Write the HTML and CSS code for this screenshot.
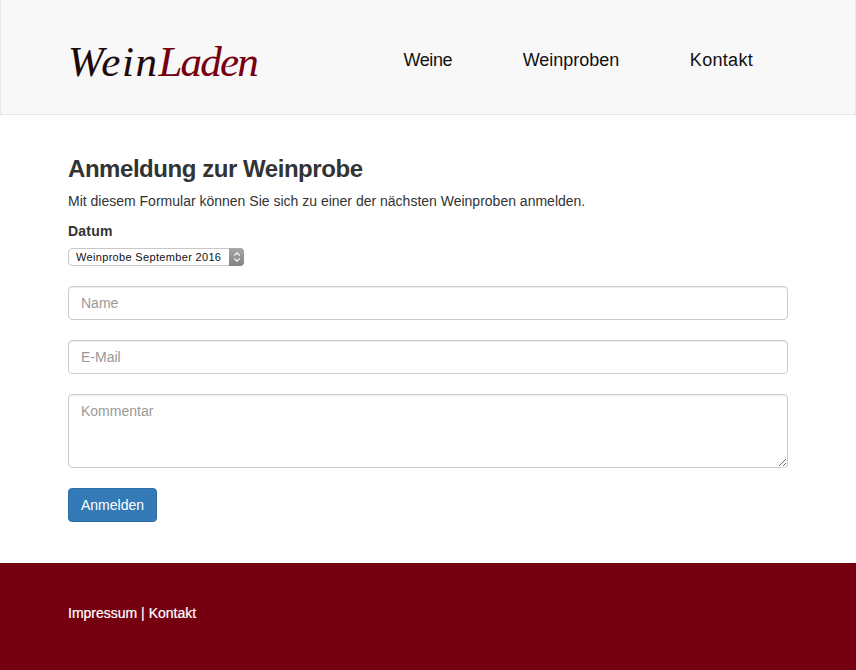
FILE: index.html
```html
<!DOCTYPE html>
<html lang="de">

<head>
    <meta charset="UTF-8">
    <meta name="viewport" content="width=device-width, initial-scale=1.0">
    <title>WeinLaden</title>
    <link rel="stylesheet" href="styles.css">
</head>

<body>
    <header class="navbar">
        <div class="container navbar-inner">
            <a class="brand" href="#"><span class="brand-first">Wein</span><span class="brand-accent">Laden</span></a>
            <nav class="nav-links">
                <a href="#">Weine</a>
                <a href="#">Weinproben</a>
                <a href="#">Kontakt</a>
            </nav>
        </div>
    </header>

    <main class="container content">
        <h1>Anmeldung zur Weinprobe</h1>
        <p class="intro">Mit diesem Formular können Sie sich zu einer der nächsten Weinproben anmelden.</p>
        <form>
            <label class="field-label" for="datum">Datum</label>
            <div class="select-wrap">
                <select id="datum">
                    <option>Weinprobe September 2016</option>
                    <option>Weinprobe Oktober 2016</option>
                </select>
                <span class="select-arrows">
                    <svg width="8" height="12" viewBox="0 0 8 12">
                        <path d="M1.2 4.6 4 1.8l2.8 2.8M1.2 7.4 4 10.2l2.8-2.8" fill="none" stroke="#fff" stroke-width="1.2"/>
                    </svg>
                </span>
            </div>
            <input class="form-control" type="text" placeholder="Name">
            <input class="form-control" type="email" placeholder="E-Mail">
            <textarea class="form-control" rows="3" placeholder="Kommentar"></textarea>
            <button class="btn" type="submit">Anmelden</button>
        </form>
    </main>

    <footer class="footer">
        <div class="container">
            <a href="#">Impressum</a> | <a href="#">Kontakt</a>
        </div>
    </footer>
</body>

</html>
```

FILE: styles.css
```css
* {
    box-sizing: border-box;
}

body {
    margin: 0;
    font-family: "Liberation Sans", Arial, sans-serif;
    font-size: 14px;
    line-height: 20px;
    color: #333;
    background: #fff;
}

a {
    color: inherit;
    text-decoration: none;
}

.container {
    width: 750px;
    margin: 0 auto;
    padding: 0 15px;
}

.navbar {
    height: 115px;
    background: #f8f8f8;
    border: 1px solid #e7e7e7;
    border-top: 0;
}

.navbar-inner {
    display: flex;
    justify-content: space-between;
    align-items: center;
    height: 114px;
    padding-top: 7px;
}

.brand {
    margin-top: 2px;
    font-family: "Liberation Serif", "Times New Roman", serif;
    font-style: italic;
    font-size: 43px;
    line-height: 50px;
    -webkit-text-stroke: 0.1px;
}

.brand-first {
    letter-spacing: 1.5px;
    color: #1d0a0a;
}

.brand-accent {
    letter-spacing: -1.8px;
    color: #75000f;
}

.nav-links {
    display: flex;
    gap: 70.5px;
    margin-bottom: 2px;
    padding-right: 35px;
    font-size: 18px;
    color: #111;
}

.nav-links a:first-child {
    letter-spacing: -0.4px;
}

.nav-links a:last-child {
    letter-spacing: 0.3px;
}

.content {
    padding-top: 39px;
    padding-bottom: 41px;
}

h1 {
    margin: 0;
    font-size: 24px;
    line-height: 30px;
    font-weight: 700;
    letter-spacing: -0.45px;
}

.intro {
    margin: 7px 0 0;
    color: #333;
}

.field-label {
    display: block;
    margin-top: 10px;
    font-weight: 700;
    letter-spacing: 0.2px;
}

.select-wrap {
    position: relative;
    width: 176px;
    height: 18px;
    margin: 7px 0 20px;
}

.select-wrap select {
    appearance: none;
    display: block;
    width: 100%;
    height: 18px;
    padding: 0 20px 0 7px;
    font-family: inherit;
    font-size: 11px;
    letter-spacing: 0.33px;
    color: #111;
    background: #fff;
    border: 1px solid #c8c8c8;
    border-radius: 4px;
}

.select-arrows {
    position: absolute;
    top: 0;
    right: 0;
    display: flex;
    align-items: center;
    justify-content: center;
    width: 15px;
    height: 18px;
    background: linear-gradient(#a8a8a8, #828282);
    border-radius: 0 4px 4px 0;
    pointer-events: none;
}

.form-control {
    display: block;
    width: 100%;
    height: 34px;
    margin-bottom: 20px;
    padding: 6px 12px;
    font-family: inherit;
    font-size: 14px;
    line-height: 20px;
    color: #555;
    background: #fff;
    border: 1px solid #ccc;
    border-radius: 4px;
    box-shadow: inset 0 1px 1px rgba(0, 0, 0, 0.075);
}

.form-control::placeholder {
    color: #999;
    opacity: 1;
}

textarea.form-control {
    height: 74px;
}

.btn {
    display: block;
    height: 34px;
    padding: 6px 12px;
    font-family: inherit;
    font-size: 14px;
    line-height: 20px;
    color: #fff;
    background: #337ab7;
    border: 1px solid #2e6da4;
    border-radius: 4px;
}

.footer {
    height: 107px;
    padding-top: 40px;
    background: #75000f;
    color: #fff;
    font-weight: 400;
    -webkit-text-stroke: 0.2px #fff;
}
```
